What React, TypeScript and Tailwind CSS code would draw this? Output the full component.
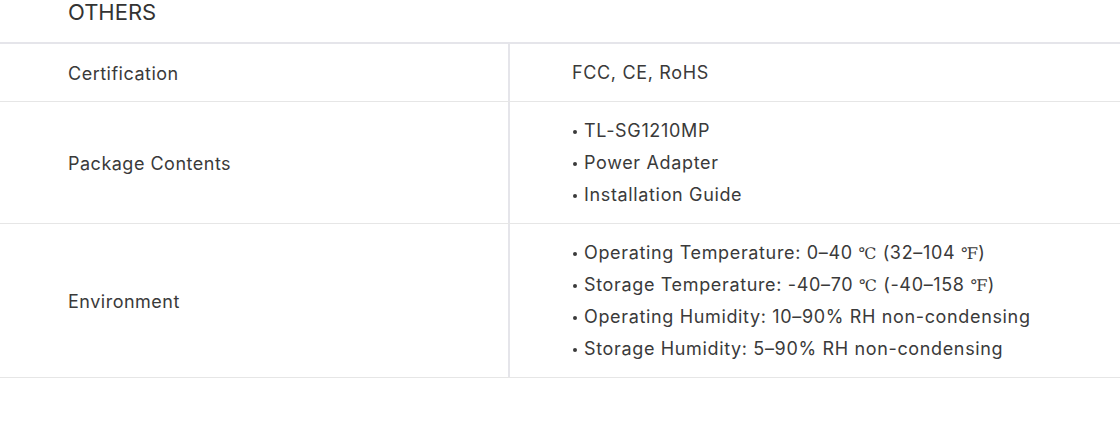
const rows: { label: string; values: string[]; bullets: boolean }[] = [
  { label: 'Certification', values: ['FCC, CE, RoHS'], bullets: false },
  {
    label: 'Package Contents',
    values: ['TL-SG1210MP', 'Power Adapter', 'Installation Guide'],
    bullets: true,
  },
  {
    label: 'Environment',
    values: [
      'Operating Temperature: 0–40 ℃ (32–104 ℉)',
      'Storage Temperature: -40–70 ℃ (-40–158 ℉)',
      'Operating Humidity: 10–90% RH non-condensing',
      'Storage Humidity: 5–90% RH non-condensing',
    ],
    bullets: true,
  },
];

// degree signs fall back to a serif face in the reference
function withUnits(text: string) {
  const parts = text.split(/([℃℉])/);
  return parts.map((p, i) =>
    p === '℃' || p === '℉' ? (
      <span key={i} className="font-['DejaVu_Serif',serif] text-[16px] leading-none">
        {p}
      </span>
    ) : (
      <span key={i}>{p}</span>
    )
  );
}

export default function App() {
  return (
    <div className="w-[1120px] h-[428px] bg-white text-[#3a3a3a] font-['Inter',sans-serif] overflow-hidden">
      <div className="h-[42px] pl-[68px] text-[22px] leading-[24px] text-[#333333]">OTHERS</div>
      <div className="border-t-2 border-[#e5e5ea]">
        {rows.map((row) => (
          <div key={row.label} className="flex border-b border-[#e6e6e6]">
            <div className="w-[508px] shrink-0 flex items-center pl-[68px] pt-[2px] text-[18px] leading-[32px] tracking-[0.5px]">
              {row.label}
            </div>
            <div className="flex-1 border-l-2 border-[#e5e5ea] pl-[62px] pt-[13px] pb-3 text-[18px] leading-[32px] tracking-[0.65px]">
              {row.values.map((v) => (
                <div key={v}>
                  {row.bullets && (
                    <span className="inline-block size-[4px] rounded-full bg-current align-middle ml-[1px] mr-[7px]" />
                  )}
                  {withUnits(v)}
                </div>
              ))}
            </div>
          </div>
        ))}
      </div>
    </div>
  );
}
